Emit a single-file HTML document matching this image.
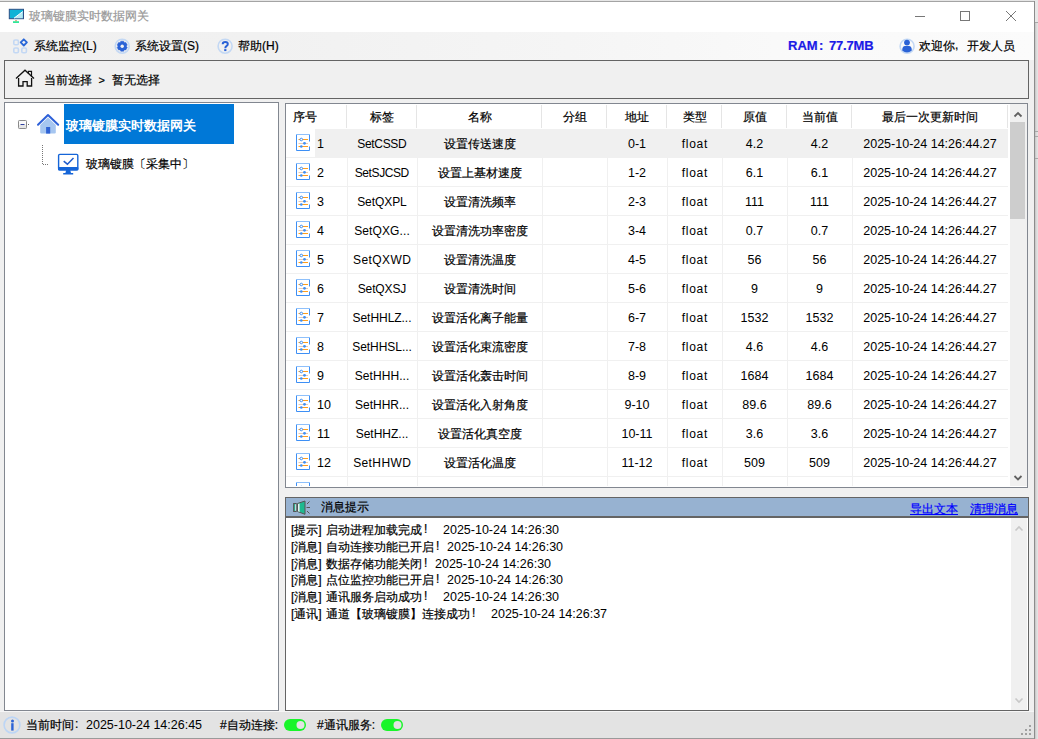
<!DOCTYPE html>
<html><head><meta charset="utf-8">
<style>
*{box-sizing:border-box;margin:0;padding:0}
html,body{width:1038px;height:739px;overflow:hidden;background:#f0f0f0;font-family:"Liberation Sans",sans-serif;font-size:12px;color:#000}
.a{position:absolute;white-space:nowrap}
.panel{position:absolute;border:1px solid #646464}
#tbl{position:absolute;left:0;top:0;width:1038px;height:739px;clip-path:inset(104px 30px 253px 286px)}
.c{text-align:center}
.hc{text-align:center}
.num,.dt{font-size:12.5px}
.lat{}
.flt{letter-spacing:0.75px;text-indent:0.75px}
.msg div{position:absolute;white-space:nowrap}
.lnk{color:#0000ff;text-decoration:underline}
.ram{color:#1a1ae6;font-weight:bold;font-size:13px}
body{-webkit-text-stroke:0.2px currentColor}
.num,.dt,.lat,.flt{-webkit-text-stroke:0;margin-top:1px}
.c.cjk{margin-left:0}

</style></head><body>
<div class="a" style="left:0;top:0;width:1038px;height:1px;background:#e6e6e6"></div>
<div class="a" style="left:0;top:1px;width:1035px;height:1px;background:#a4a4a4"></div>
<div class="a" style="left:0;top:2px;width:1034px;height:30px;background:#fff"></div>
<div class="a" style="left:1034px;top:1px;width:1px;height:738px;background:#8c8c8c"></div>
<div class="a" style="left:1035px;top:0;width:3px;height:22px;background:#e8e8e8"></div>
<div class="a" style="left:1035px;top:22px;width:3px;height:717px;background:linear-gradient(to right,#c4c4c4,#dadada 50%,#e6e6e6)"></div>
<div class="a" style="left:1035px;top:22px;width:3px;height:1px;background:#a8a8a8"></div>
<div class="a" style="left:1035px;top:131px;width:3px;height:1px;background:#a8a8a8"></div>
<div class="a" style="left:1035px;top:136px;width:3px;height:1px;background:#a8a8a8"></div>
<div class="a" style="left:1035px;top:158px;width:3px;height:1px;background:#a8a8a8"></div>
<div class="a" style="left:0;top:738px;width:1034px;height:1px;background:#9a9a9a"></div>
<!-- title -->
<svg class="a" style="left:0;top:0" width="40" height="30" viewBox="0 0 40 30">
  <rect x="9.3" y="9.3" width="14.2" height="9.4" fill="#0fb3d6" stroke="#2d4f86" stroke-width="1"/>
  <path d="M14 18.2 L22.8 11.5 V18.2 Z" fill="#fff" opacity="0.7"/>
  <path d="M14 18.2 L22.8 11.5" stroke="#fff" stroke-width="1"/>
  <rect x="13" y="21.2" width="6" height="1.8" fill="#2ee89a"/>
  <rect x="15" y="20.2" width="2" height="1" fill="#c87a30" opacity="0.7"/>
</svg>
<div class="a" style="left:29px;top:8px;color:#999">玻璃镀膜实时数据网关</div>
<div class="a" style="left:915px;top:16px;width:10px;height:1px;background:#777"></div>
<div class="a" style="left:960px;top:11px;width:10px;height:10px;border:1px solid #777"></div>
<svg class="a" style="left:1005px;top:10px" width="12" height="12" viewBox="0 0 12 12"><path d="M1 1L11 11M11 1L1 11" stroke="#777" stroke-width="1"/></svg>

<!-- menu -->
<div class="a" style="left:0;top:32px;width:1034px;height:28px;background:linear-gradient(to right,#f0f0f0 0%,#f1f1f1 25%,#f5f5f5 55%,#f9f9f9 75%,#fbfbfb 100%)"></div>
<svg class="a" style="left:0;top:0" width="1038" height="739" viewBox="0 0 1038 739">
 <g fill="none" stroke="#c3d8f4" stroke-width="1.6">
  <rect x="13.8" y="40" width="4.6" height="4.8" rx="1.3"/>
  <rect x="13.8" y="48" width="4.6" height="4.8" rx="1.3"/>
  <rect x="21.8" y="48" width="4.6" height="4.8" rx="1.3"/>
 </g>
 <path d="M23.8 39.3 L26.9 42.4 L23.8 45.5 L20.7 42.4 Z" fill="none" stroke="#2a68d8" stroke-width="1.8" stroke-linejoin="round"/>
 <circle cx="122.2" cy="46.2" r="7" fill="none" stroke="#c3d8f4" stroke-width="1.6"/>
 <path d="M120.13 42.89 L120.77 41.20 L123.63 41.20 L124.27 42.89 L124.03 42.76 L125.81 42.46 L127.25 44.94 L126.10 46.34 L126.10 46.06 L127.25 47.46 L125.81 49.94 L124.03 49.64 L124.27 49.51 L123.63 51.20 L120.77 51.20 L120.13 49.51 L120.37 49.64 L118.59 49.94 L117.15 47.46 L118.30 46.06 L118.30 46.34 L117.15 44.94 L118.59 42.46 L120.37 42.76Z" fill="#2a62d6" stroke="#2a62d6" stroke-width="0.5" stroke-linejoin="round"/>
 <circle cx="122.2" cy="46.2" r="1.7" fill="#f2f2f2"/>
 <circle cx="225.1" cy="46.2" r="7" fill="none" stroke="#c3d8f4" stroke-width="1.6"/>
 <circle cx="907.1" cy="46.2" r="7" fill="none" stroke="#c3d8f4" stroke-width="1.6"/>
 <circle cx="907" cy="42.6" r="2.9" fill="#2a62d6"/>
 <path d="M902.2 50.5 Q902.2 46.2 905 46 H909 Q911.8 46.2 911.8 50.5 Q909.5 52.6 907 52.6 Q904.5 52.6 902.2 50.5Z" fill="#2a62d6"/>
</svg>
<svg class="a" style="left:0;top:0" width="1038" height="739" viewBox="0 0 1038 739"><path d="M222.7 44.2 Q222.7 41.9 225.3 41.9 Q227.8 41.9 227.8 44 Q227.8 45.3 226.4 46.1 Q225.3 46.8 225.3 48.2" fill="none" stroke="#2a62d6" stroke-width="2"/><rect x="224.2" y="49.1" width="2.2" height="2" fill="#2a62d6"/></svg>
<div class="a" style="left:34px;top:38px">系统监控(L)</div>
<div class="a" style="left:135px;top:38px">系统设置(S)</div>
<div class="a" style="left:238px;top:38px">帮助(H)</div>
<div class="a ram" style="left:788px;top:38px">RAM</div><div class="a ram" style="left:819px;top:38px">:</div><div class="a ram" style="left:829px;top:38px;letter-spacing:-0.2px">77.7MB</div>
<div class="a" style="left:919px;top:38px">欢迎你</div><div class="a" style="left:955px;top:38px">,</div><div class="a" style="left:967px;top:38px">开发人员</div>

<!-- breadcrumb -->
<div class="panel" style="left:4px;top:60px;width:1025px;height:39px;background:#f0f0f0"></div>
<div class="a" style="left:44px;top:72px">当前选择</div><div class="a" style="left:98.5px;top:74px;font-size:11px">&gt;</div><div class="a" style="left:112px;top:72px">暂无选择</div>
<svg class="a" style="left:0;top:0" width="1038" height="739" viewBox="0 0 1038 739">
 <path d="M16 78.6 L25 70.2 L34 78.6" fill="none" stroke="#111" stroke-width="1.3"/>
 <path d="M18.6 78 V86 H23 V81.6 H27.2 V86 H31.6 V78" fill="none" stroke="#111" stroke-width="1.3"/>
 <path d="M28.4 73.8 V71.4 H31.5 V76.5" fill="none" stroke="#111" stroke-width="1.2"/>
</svg>

<!-- tree panel -->
<div class="panel" style="left:4px;top:102px;width:275px;height:609px;background:#fff;border-color:#828790"></div>
<div class="a" style="left:64px;top:104px;width:170px;height:40px;background:#0078d7"></div>
<div class="a" style="left:66px;top:117px;color:#fff;font-weight:bold;font-size:13px;-webkit-text-stroke:0">玻璃镀膜实时数据网关</div>
<div class="a" style="left:86px;top:156px">玻璃镀膜〔采集中〕</div>
<svg class="a" style="left:0;top:0" width="1038" height="739" viewBox="0 0 1038 739">
 <rect x="18.5" y="120.5" width="8" height="8" fill="#fafafa" stroke="#8a8a8a" rx="0.8"/>
 <rect x="19" y="125" width="7" height="3" fill="#e6e6e6"/>
 <path d="M20.5 124.5 H24.5" stroke="#3040a0" stroke-width="1"/>
 <rect x="28" y="124" width="1" height="1" fill="#666"/>
 <path d="M42.5 145 V165" stroke="#777" stroke-width="1" stroke-dasharray="1 1"/>
 <path d="M43 164.5 H49" stroke="#777" stroke-width="1" stroke-dasharray="1 1"/>
 <path d="M40.2 125 L48 117.6 L55.8 125 V132.5 Q55.8 133.6 54.7 133.6 H41.3 Q40.2 133.6 40.2 132.5 Z" fill="#a6c6f0"/>
 <path d="M38 124.8 L48 115 L58.2 124.8" fill="none" stroke="#2d60d8" stroke-width="2" stroke-linejoin="round" stroke-linecap="round"/>
 <rect x="46.1" y="127" width="4.1" height="6.6" fill="#2f62d4"/>
 <rect x="58.6" y="154.4" width="19.2" height="15.4" rx="1.2" fill="#fff" stroke="#1565d8" stroke-width="1.4"/>
 <rect x="58" y="167" width="20.4" height="3.4" rx="1" fill="#1565d8"/>
 <path d="M66.2 170 H70.2 L71 173 H73.2 V174.4 H63.2 V173 H65.4 Z" fill="#1565d8"/>
 <path d="M63.7 161.2 L67.4 164.2 L73.5 158" fill="none" stroke="#1f5ccc" stroke-width="1.5"/>
</svg>

<!-- table panel -->
<div class="panel" style="left:285px;top:103px;width:743px;height:385px;background:#fff;border-color:#828790"></div>
<div class="a" style="left:1010px;top:104px;width:17px;height:382px;background:#f0f0f0"></div>
<div class="a" style="left:1010px;top:122px;width:15px;height:97px;background:#cdcdcd"></div>
<div id="tbl"><div class="a" style="left:293px;top:109px">序号</div>
<div class="a hc" style="left:347px;width:70px;top:109px">标签</div>
<div class="a" style="left:346px;top:105px;width:1px;height:23px;background:#e5e5e5"></div>
<div class="a hc" style="left:417px;width:125px;top:109px">名称</div>
<div class="a" style="left:416px;top:105px;width:1px;height:23px;background:#e5e5e5"></div>
<div class="a hc" style="left:542px;width:65px;top:109px">分组</div>
<div class="a" style="left:541px;top:105px;width:1px;height:23px;background:#e5e5e5"></div>
<div class="a hc" style="left:607px;width:60px;top:109px">地址</div>
<div class="a" style="left:606px;top:105px;width:1px;height:23px;background:#e5e5e5"></div>
<div class="a hc" style="left:667px;width:55px;top:109px">类型</div>
<div class="a" style="left:666px;top:105px;width:1px;height:23px;background:#e5e5e5"></div>
<div class="a hc" style="left:722px;width:65px;top:109px">原值</div>
<div class="a" style="left:721px;top:105px;width:1px;height:23px;background:#e5e5e5"></div>
<div class="a hc" style="left:787px;width:65px;top:109px">当前值</div>
<div class="a" style="left:786px;top:105px;width:1px;height:23px;background:#e5e5e5"></div>
<div class="a hc" style="left:852px;width:156px;top:109px">最后一次更新时间</div>
<div class="a" style="left:851px;top:105px;width:1px;height:23px;background:#e5e5e5"></div>
<div class="a" style="left:1007px;top:105px;width:1px;height:23px;background:#e5e5e5"></div>
<div class="a" style="left:315px;top:129px;width:693px;height:28px;background:#f0f0f0"></div>
<div class="a" style="left:286px;top:157px;width:722px;height:1px;background:#f0f0f0"></div>
<svg class="a" style="left:296px;top:134px" width="14" height="17" viewBox="0 0 14 17"><path d="M0.5 16.5V0.5H13.5V7.5M13.5 12.5V16.5H0.5" fill="none" stroke="#3d8ff5" stroke-width="1"/><path d="M0 0.5H14" stroke="#8ec0fb"/><path d="M2.5 5.5H12" stroke="#ff9d1a"/><path d="M2.5 9.5H12" stroke="#e8c9b0"/><path d="M2.5 12.5H12" stroke="#ff9d1a"/><circle cx="5.3" cy="5.5" r="1.3" fill="#fff" stroke="#3d8ff5"/><circle cx="8.5" cy="9.3" r="1.4" fill="#3d8ff5"/><circle cx="5.3" cy="12.5" r="1.3" fill="#3d8ff5"/></svg>
<div class="a num" style="left:317px;top:136px">1</div>
<div class="a c lat" style="left:347px;width:70px;top:136px;letter-spacing:-0.33px;text-indent:-0.33px">SetCSSD</div>
<div class="a c cjk" style="left:417px;width:125px;top:136px">设置传送速度</div>
<div class="a c num" style="left:607px;width:60px;top:136px">0-1</div>
<div class="a c flt" style="left:667px;width:55px;top:136px">float</div>
<div class="a c num" style="left:722px;width:65px;top:136px">4.2</div>
<div class="a c num" style="left:787px;width:65px;top:136px">4.2</div>
<div class="a c dt" style="left:852px;width:156px;top:136px">2025-10-24 14:26:44.27</div>
<div class="a" style="left:347px;top:158px;width:1px;height:28px;background:#f0f0f0"></div>
<div class="a" style="left:417px;top:158px;width:1px;height:28px;background:#f0f0f0"></div>
<div class="a" style="left:542px;top:158px;width:1px;height:28px;background:#f0f0f0"></div>
<div class="a" style="left:607px;top:158px;width:1px;height:28px;background:#f0f0f0"></div>
<div class="a" style="left:667px;top:158px;width:1px;height:28px;background:#f0f0f0"></div>
<div class="a" style="left:722px;top:158px;width:1px;height:28px;background:#f0f0f0"></div>
<div class="a" style="left:787px;top:158px;width:1px;height:28px;background:#f0f0f0"></div>
<div class="a" style="left:852px;top:158px;width:1px;height:28px;background:#f0f0f0"></div>
<div class="a" style="left:1008px;top:158px;width:1px;height:28px;background:#f0f0f0"></div>
<div class="a" style="left:286px;top:186px;width:722px;height:1px;background:#f0f0f0"></div>
<svg class="a" style="left:296px;top:163px" width="14" height="17" viewBox="0 0 14 17"><path d="M0.5 16.5V0.5H13.5V7.5M13.5 12.5V16.5H0.5" fill="none" stroke="#3d8ff5" stroke-width="1"/><path d="M0 0.5H14" stroke="#8ec0fb"/><path d="M2.5 5.5H12" stroke="#ff9d1a"/><path d="M2.5 9.5H12" stroke="#e8c9b0"/><path d="M2.5 12.5H12" stroke="#ff9d1a"/><circle cx="5.3" cy="5.5" r="1.3" fill="#fff" stroke="#3d8ff5"/><circle cx="8.5" cy="9.3" r="1.4" fill="#3d8ff5"/><circle cx="5.3" cy="12.5" r="1.3" fill="#3d8ff5"/></svg>
<div class="a num" style="left:317px;top:165px">2</div>
<div class="a c lat" style="left:347px;width:70px;top:165px;letter-spacing:-0.4px;text-indent:-0.4px">SetSJCSD</div>
<div class="a c cjk" style="left:417px;width:125px;top:165px">设置上基材速度</div>
<div class="a c num" style="left:607px;width:60px;top:165px">1-2</div>
<div class="a c flt" style="left:667px;width:55px;top:165px">float</div>
<div class="a c num" style="left:722px;width:65px;top:165px">6.1</div>
<div class="a c num" style="left:787px;width:65px;top:165px">6.1</div>
<div class="a c dt" style="left:852px;width:156px;top:165px">2025-10-24 14:26:44.27</div>
<div class="a" style="left:347px;top:187px;width:1px;height:28px;background:#f0f0f0"></div>
<div class="a" style="left:417px;top:187px;width:1px;height:28px;background:#f0f0f0"></div>
<div class="a" style="left:542px;top:187px;width:1px;height:28px;background:#f0f0f0"></div>
<div class="a" style="left:607px;top:187px;width:1px;height:28px;background:#f0f0f0"></div>
<div class="a" style="left:667px;top:187px;width:1px;height:28px;background:#f0f0f0"></div>
<div class="a" style="left:722px;top:187px;width:1px;height:28px;background:#f0f0f0"></div>
<div class="a" style="left:787px;top:187px;width:1px;height:28px;background:#f0f0f0"></div>
<div class="a" style="left:852px;top:187px;width:1px;height:28px;background:#f0f0f0"></div>
<div class="a" style="left:1008px;top:187px;width:1px;height:28px;background:#f0f0f0"></div>
<div class="a" style="left:286px;top:215px;width:722px;height:1px;background:#f0f0f0"></div>
<svg class="a" style="left:296px;top:192px" width="14" height="17" viewBox="0 0 14 17"><path d="M0.5 16.5V0.5H13.5V7.5M13.5 12.5V16.5H0.5" fill="none" stroke="#3d8ff5" stroke-width="1"/><path d="M0 0.5H14" stroke="#8ec0fb"/><path d="M2.5 5.5H12" stroke="#ff9d1a"/><path d="M2.5 9.5H12" stroke="#e8c9b0"/><path d="M2.5 12.5H12" stroke="#ff9d1a"/><circle cx="5.3" cy="5.5" r="1.3" fill="#fff" stroke="#3d8ff5"/><circle cx="8.5" cy="9.3" r="1.4" fill="#3d8ff5"/><circle cx="5.3" cy="12.5" r="1.3" fill="#3d8ff5"/></svg>
<div class="a num" style="left:317px;top:194px">3</div>
<div class="a c lat" style="left:347px;width:70px;top:194px;letter-spacing:-0.07px;text-indent:-0.07px">SetQXPL</div>
<div class="a c cjk" style="left:417px;width:125px;top:194px">设置清洗频率</div>
<div class="a c num" style="left:607px;width:60px;top:194px">2-3</div>
<div class="a c flt" style="left:667px;width:55px;top:194px">float</div>
<div class="a c num" style="left:722px;width:65px;top:194px">111</div>
<div class="a c num" style="left:787px;width:65px;top:194px">111</div>
<div class="a c dt" style="left:852px;width:156px;top:194px">2025-10-24 14:26:44.27</div>
<div class="a" style="left:347px;top:216px;width:1px;height:28px;background:#f0f0f0"></div>
<div class="a" style="left:417px;top:216px;width:1px;height:28px;background:#f0f0f0"></div>
<div class="a" style="left:542px;top:216px;width:1px;height:28px;background:#f0f0f0"></div>
<div class="a" style="left:607px;top:216px;width:1px;height:28px;background:#f0f0f0"></div>
<div class="a" style="left:667px;top:216px;width:1px;height:28px;background:#f0f0f0"></div>
<div class="a" style="left:722px;top:216px;width:1px;height:28px;background:#f0f0f0"></div>
<div class="a" style="left:787px;top:216px;width:1px;height:28px;background:#f0f0f0"></div>
<div class="a" style="left:852px;top:216px;width:1px;height:28px;background:#f0f0f0"></div>
<div class="a" style="left:1008px;top:216px;width:1px;height:28px;background:#f0f0f0"></div>
<div class="a" style="left:286px;top:244px;width:722px;height:1px;background:#f0f0f0"></div>
<svg class="a" style="left:296px;top:221px" width="14" height="17" viewBox="0 0 14 17"><path d="M0.5 16.5V0.5H13.5V7.5M13.5 12.5V16.5H0.5" fill="none" stroke="#3d8ff5" stroke-width="1"/><path d="M0 0.5H14" stroke="#8ec0fb"/><path d="M2.5 5.5H12" stroke="#ff9d1a"/><path d="M2.5 9.5H12" stroke="#e8c9b0"/><path d="M2.5 12.5H12" stroke="#ff9d1a"/><circle cx="5.3" cy="5.5" r="1.3" fill="#fff" stroke="#3d8ff5"/><circle cx="8.5" cy="9.3" r="1.4" fill="#3d8ff5"/><circle cx="5.3" cy="12.5" r="1.3" fill="#3d8ff5"/></svg>
<div class="a num" style="left:317px;top:223px">4</div>
<div class="a c lat" style="left:347px;width:70px;top:223px;letter-spacing:0.11px;text-indent:0.11px">SetQXG...</div>
<div class="a c cjk" style="left:417px;width:125px;top:223px">设置清洗功率密度</div>
<div class="a c num" style="left:607px;width:60px;top:223px">3-4</div>
<div class="a c flt" style="left:667px;width:55px;top:223px">float</div>
<div class="a c num" style="left:722px;width:65px;top:223px">0.7</div>
<div class="a c num" style="left:787px;width:65px;top:223px">0.7</div>
<div class="a c dt" style="left:852px;width:156px;top:223px">2025-10-24 14:26:44.27</div>
<div class="a" style="left:347px;top:245px;width:1px;height:28px;background:#f0f0f0"></div>
<div class="a" style="left:417px;top:245px;width:1px;height:28px;background:#f0f0f0"></div>
<div class="a" style="left:542px;top:245px;width:1px;height:28px;background:#f0f0f0"></div>
<div class="a" style="left:607px;top:245px;width:1px;height:28px;background:#f0f0f0"></div>
<div class="a" style="left:667px;top:245px;width:1px;height:28px;background:#f0f0f0"></div>
<div class="a" style="left:722px;top:245px;width:1px;height:28px;background:#f0f0f0"></div>
<div class="a" style="left:787px;top:245px;width:1px;height:28px;background:#f0f0f0"></div>
<div class="a" style="left:852px;top:245px;width:1px;height:28px;background:#f0f0f0"></div>
<div class="a" style="left:1008px;top:245px;width:1px;height:28px;background:#f0f0f0"></div>
<div class="a" style="left:286px;top:273px;width:722px;height:1px;background:#f0f0f0"></div>
<svg class="a" style="left:296px;top:250px" width="14" height="17" viewBox="0 0 14 17"><path d="M0.5 16.5V0.5H13.5V7.5M13.5 12.5V16.5H0.5" fill="none" stroke="#3d8ff5" stroke-width="1"/><path d="M0 0.5H14" stroke="#8ec0fb"/><path d="M2.5 5.5H12" stroke="#ff9d1a"/><path d="M2.5 9.5H12" stroke="#e8c9b0"/><path d="M2.5 12.5H12" stroke="#ff9d1a"/><circle cx="5.3" cy="5.5" r="1.3" fill="#fff" stroke="#3d8ff5"/><circle cx="8.5" cy="9.3" r="1.4" fill="#3d8ff5"/><circle cx="5.3" cy="12.5" r="1.3" fill="#3d8ff5"/></svg>
<div class="a num" style="left:317px;top:252px">5</div>
<div class="a c lat" style="left:347px;width:70px;top:252px;letter-spacing:0.4px;text-indent:0.4px">SetQXWD</div>
<div class="a c cjk" style="left:417px;width:125px;top:252px">设置清洗温度</div>
<div class="a c num" style="left:607px;width:60px;top:252px">4-5</div>
<div class="a c flt" style="left:667px;width:55px;top:252px">float</div>
<div class="a c num" style="left:722px;width:65px;top:252px">56</div>
<div class="a c num" style="left:787px;width:65px;top:252px">56</div>
<div class="a c dt" style="left:852px;width:156px;top:252px">2025-10-24 14:26:44.27</div>
<div class="a" style="left:347px;top:274px;width:1px;height:28px;background:#f0f0f0"></div>
<div class="a" style="left:417px;top:274px;width:1px;height:28px;background:#f0f0f0"></div>
<div class="a" style="left:542px;top:274px;width:1px;height:28px;background:#f0f0f0"></div>
<div class="a" style="left:607px;top:274px;width:1px;height:28px;background:#f0f0f0"></div>
<div class="a" style="left:667px;top:274px;width:1px;height:28px;background:#f0f0f0"></div>
<div class="a" style="left:722px;top:274px;width:1px;height:28px;background:#f0f0f0"></div>
<div class="a" style="left:787px;top:274px;width:1px;height:28px;background:#f0f0f0"></div>
<div class="a" style="left:852px;top:274px;width:1px;height:28px;background:#f0f0f0"></div>
<div class="a" style="left:1008px;top:274px;width:1px;height:28px;background:#f0f0f0"></div>
<div class="a" style="left:286px;top:302px;width:722px;height:1px;background:#f0f0f0"></div>
<svg class="a" style="left:296px;top:279px" width="14" height="17" viewBox="0 0 14 17"><path d="M0.5 16.5V0.5H13.5V7.5M13.5 12.5V16.5H0.5" fill="none" stroke="#3d8ff5" stroke-width="1"/><path d="M0 0.5H14" stroke="#8ec0fb"/><path d="M2.5 5.5H12" stroke="#ff9d1a"/><path d="M2.5 9.5H12" stroke="#e8c9b0"/><path d="M2.5 12.5H12" stroke="#ff9d1a"/><circle cx="5.3" cy="5.5" r="1.3" fill="#fff" stroke="#3d8ff5"/><circle cx="8.5" cy="9.3" r="1.4" fill="#3d8ff5"/><circle cx="5.3" cy="12.5" r="1.3" fill="#3d8ff5"/></svg>
<div class="a num" style="left:317px;top:281px">6</div>
<div class="a c lat" style="left:347px;width:70px;top:281px;letter-spacing:-0.12px;text-indent:-0.12px">SetQXSJ</div>
<div class="a c cjk" style="left:417px;width:125px;top:281px">设置清洗时间</div>
<div class="a c num" style="left:607px;width:60px;top:281px">5-6</div>
<div class="a c flt" style="left:667px;width:55px;top:281px">float</div>
<div class="a c num" style="left:722px;width:65px;top:281px">9</div>
<div class="a c num" style="left:787px;width:65px;top:281px">9</div>
<div class="a c dt" style="left:852px;width:156px;top:281px">2025-10-24 14:26:44.27</div>
<div class="a" style="left:347px;top:303px;width:1px;height:28px;background:#f0f0f0"></div>
<div class="a" style="left:417px;top:303px;width:1px;height:28px;background:#f0f0f0"></div>
<div class="a" style="left:542px;top:303px;width:1px;height:28px;background:#f0f0f0"></div>
<div class="a" style="left:607px;top:303px;width:1px;height:28px;background:#f0f0f0"></div>
<div class="a" style="left:667px;top:303px;width:1px;height:28px;background:#f0f0f0"></div>
<div class="a" style="left:722px;top:303px;width:1px;height:28px;background:#f0f0f0"></div>
<div class="a" style="left:787px;top:303px;width:1px;height:28px;background:#f0f0f0"></div>
<div class="a" style="left:852px;top:303px;width:1px;height:28px;background:#f0f0f0"></div>
<div class="a" style="left:1008px;top:303px;width:1px;height:28px;background:#f0f0f0"></div>
<div class="a" style="left:286px;top:331px;width:722px;height:1px;background:#f0f0f0"></div>
<svg class="a" style="left:296px;top:308px" width="14" height="17" viewBox="0 0 14 17"><path d="M0.5 16.5V0.5H13.5V7.5M13.5 12.5V16.5H0.5" fill="none" stroke="#3d8ff5" stroke-width="1"/><path d="M0 0.5H14" stroke="#8ec0fb"/><path d="M2.5 5.5H12" stroke="#ff9d1a"/><path d="M2.5 9.5H12" stroke="#e8c9b0"/><path d="M2.5 12.5H12" stroke="#ff9d1a"/><circle cx="5.3" cy="5.5" r="1.3" fill="#fff" stroke="#3d8ff5"/><circle cx="8.5" cy="9.3" r="1.4" fill="#3d8ff5"/><circle cx="5.3" cy="12.5" r="1.3" fill="#3d8ff5"/></svg>
<div class="a num" style="left:317px;top:310px">7</div>
<div class="a c lat" style="left:347px;width:70px;top:310px;letter-spacing:-0.04px;text-indent:-0.04px">SetHHLZ...</div>
<div class="a c cjk" style="left:417px;width:125px;top:310px">设置活化离子能量</div>
<div class="a c num" style="left:607px;width:60px;top:310px">6-7</div>
<div class="a c flt" style="left:667px;width:55px;top:310px">float</div>
<div class="a c num" style="left:722px;width:65px;top:310px">1532</div>
<div class="a c num" style="left:787px;width:65px;top:310px">1532</div>
<div class="a c dt" style="left:852px;width:156px;top:310px">2025-10-24 14:26:44.27</div>
<div class="a" style="left:347px;top:332px;width:1px;height:28px;background:#f0f0f0"></div>
<div class="a" style="left:417px;top:332px;width:1px;height:28px;background:#f0f0f0"></div>
<div class="a" style="left:542px;top:332px;width:1px;height:28px;background:#f0f0f0"></div>
<div class="a" style="left:607px;top:332px;width:1px;height:28px;background:#f0f0f0"></div>
<div class="a" style="left:667px;top:332px;width:1px;height:28px;background:#f0f0f0"></div>
<div class="a" style="left:722px;top:332px;width:1px;height:28px;background:#f0f0f0"></div>
<div class="a" style="left:787px;top:332px;width:1px;height:28px;background:#f0f0f0"></div>
<div class="a" style="left:852px;top:332px;width:1px;height:28px;background:#f0f0f0"></div>
<div class="a" style="left:1008px;top:332px;width:1px;height:28px;background:#f0f0f0"></div>
<div class="a" style="left:286px;top:360px;width:722px;height:1px;background:#f0f0f0"></div>
<svg class="a" style="left:296px;top:337px" width="14" height="17" viewBox="0 0 14 17"><path d="M0.5 16.5V0.5H13.5V7.5M13.5 12.5V16.5H0.5" fill="none" stroke="#3d8ff5" stroke-width="1"/><path d="M0 0.5H14" stroke="#8ec0fb"/><path d="M2.5 5.5H12" stroke="#ff9d1a"/><path d="M2.5 9.5H12" stroke="#e8c9b0"/><path d="M2.5 12.5H12" stroke="#ff9d1a"/><circle cx="5.3" cy="5.5" r="1.3" fill="#fff" stroke="#3d8ff5"/><circle cx="8.5" cy="9.3" r="1.4" fill="#3d8ff5"/><circle cx="5.3" cy="12.5" r="1.3" fill="#3d8ff5"/></svg>
<div class="a num" style="left:317px;top:339px">8</div>
<div class="a c lat" style="left:347px;width:70px;top:339px;letter-spacing:-0.04px;text-indent:-0.04px">SetHHSL...</div>
<div class="a c cjk" style="left:417px;width:125px;top:339px">设置活化束流密度</div>
<div class="a c num" style="left:607px;width:60px;top:339px">7-8</div>
<div class="a c flt" style="left:667px;width:55px;top:339px">float</div>
<div class="a c num" style="left:722px;width:65px;top:339px">4.6</div>
<div class="a c num" style="left:787px;width:65px;top:339px">4.6</div>
<div class="a c dt" style="left:852px;width:156px;top:339px">2025-10-24 14:26:44.27</div>
<div class="a" style="left:347px;top:361px;width:1px;height:28px;background:#f0f0f0"></div>
<div class="a" style="left:417px;top:361px;width:1px;height:28px;background:#f0f0f0"></div>
<div class="a" style="left:542px;top:361px;width:1px;height:28px;background:#f0f0f0"></div>
<div class="a" style="left:607px;top:361px;width:1px;height:28px;background:#f0f0f0"></div>
<div class="a" style="left:667px;top:361px;width:1px;height:28px;background:#f0f0f0"></div>
<div class="a" style="left:722px;top:361px;width:1px;height:28px;background:#f0f0f0"></div>
<div class="a" style="left:787px;top:361px;width:1px;height:28px;background:#f0f0f0"></div>
<div class="a" style="left:852px;top:361px;width:1px;height:28px;background:#f0f0f0"></div>
<div class="a" style="left:1008px;top:361px;width:1px;height:28px;background:#f0f0f0"></div>
<div class="a" style="left:286px;top:389px;width:722px;height:1px;background:#f0f0f0"></div>
<svg class="a" style="left:296px;top:366px" width="14" height="17" viewBox="0 0 14 17"><path d="M0.5 16.5V0.5H13.5V7.5M13.5 12.5V16.5H0.5" fill="none" stroke="#3d8ff5" stroke-width="1"/><path d="M0 0.5H14" stroke="#8ec0fb"/><path d="M2.5 5.5H12" stroke="#ff9d1a"/><path d="M2.5 9.5H12" stroke="#e8c9b0"/><path d="M2.5 12.5H12" stroke="#ff9d1a"/><circle cx="5.3" cy="5.5" r="1.3" fill="#fff" stroke="#3d8ff5"/><circle cx="8.5" cy="9.3" r="1.4" fill="#3d8ff5"/><circle cx="5.3" cy="12.5" r="1.3" fill="#3d8ff5"/></svg>
<div class="a num" style="left:317px;top:368px">9</div>
<div class="a c lat" style="left:347px;width:70px;top:368px;letter-spacing:0.08px;text-indent:0.08px">SetHHH...</div>
<div class="a c cjk" style="left:417px;width:125px;top:368px">设置活化轰击时间</div>
<div class="a c num" style="left:607px;width:60px;top:368px">8-9</div>
<div class="a c flt" style="left:667px;width:55px;top:368px">float</div>
<div class="a c num" style="left:722px;width:65px;top:368px">1684</div>
<div class="a c num" style="left:787px;width:65px;top:368px">1684</div>
<div class="a c dt" style="left:852px;width:156px;top:368px">2025-10-24 14:26:44.27</div>
<div class="a" style="left:347px;top:390px;width:1px;height:28px;background:#f0f0f0"></div>
<div class="a" style="left:417px;top:390px;width:1px;height:28px;background:#f0f0f0"></div>
<div class="a" style="left:542px;top:390px;width:1px;height:28px;background:#f0f0f0"></div>
<div class="a" style="left:607px;top:390px;width:1px;height:28px;background:#f0f0f0"></div>
<div class="a" style="left:667px;top:390px;width:1px;height:28px;background:#f0f0f0"></div>
<div class="a" style="left:722px;top:390px;width:1px;height:28px;background:#f0f0f0"></div>
<div class="a" style="left:787px;top:390px;width:1px;height:28px;background:#f0f0f0"></div>
<div class="a" style="left:852px;top:390px;width:1px;height:28px;background:#f0f0f0"></div>
<div class="a" style="left:1008px;top:390px;width:1px;height:28px;background:#f0f0f0"></div>
<div class="a" style="left:286px;top:418px;width:722px;height:1px;background:#f0f0f0"></div>
<svg class="a" style="left:296px;top:395px" width="14" height="17" viewBox="0 0 14 17"><path d="M0.5 16.5V0.5H13.5V7.5M13.5 12.5V16.5H0.5" fill="none" stroke="#3d8ff5" stroke-width="1"/><path d="M0 0.5H14" stroke="#8ec0fb"/><path d="M2.5 5.5H12" stroke="#ff9d1a"/><path d="M2.5 9.5H12" stroke="#e8c9b0"/><path d="M2.5 12.5H12" stroke="#ff9d1a"/><circle cx="5.3" cy="5.5" r="1.3" fill="#fff" stroke="#3d8ff5"/><circle cx="8.5" cy="9.3" r="1.4" fill="#3d8ff5"/><circle cx="5.3" cy="12.5" r="1.3" fill="#3d8ff5"/></svg>
<div class="a num" style="left:317px;top:397px">10</div>
<div class="a c lat" style="left:347px;width:70px;top:397px;letter-spacing:0px;text-indent:0px">SetHHR...</div>
<div class="a c cjk" style="left:417px;width:125px;top:397px">设置活化入射角度</div>
<div class="a c num" style="left:607px;width:60px;top:397px">9-10</div>
<div class="a c flt" style="left:667px;width:55px;top:397px">float</div>
<div class="a c num" style="left:722px;width:65px;top:397px">89.6</div>
<div class="a c num" style="left:787px;width:65px;top:397px">89.6</div>
<div class="a c dt" style="left:852px;width:156px;top:397px">2025-10-24 14:26:44.27</div>
<div class="a" style="left:347px;top:419px;width:1px;height:28px;background:#f0f0f0"></div>
<div class="a" style="left:417px;top:419px;width:1px;height:28px;background:#f0f0f0"></div>
<div class="a" style="left:542px;top:419px;width:1px;height:28px;background:#f0f0f0"></div>
<div class="a" style="left:607px;top:419px;width:1px;height:28px;background:#f0f0f0"></div>
<div class="a" style="left:667px;top:419px;width:1px;height:28px;background:#f0f0f0"></div>
<div class="a" style="left:722px;top:419px;width:1px;height:28px;background:#f0f0f0"></div>
<div class="a" style="left:787px;top:419px;width:1px;height:28px;background:#f0f0f0"></div>
<div class="a" style="left:852px;top:419px;width:1px;height:28px;background:#f0f0f0"></div>
<div class="a" style="left:1008px;top:419px;width:1px;height:28px;background:#f0f0f0"></div>
<div class="a" style="left:286px;top:447px;width:722px;height:1px;background:#f0f0f0"></div>
<svg class="a" style="left:296px;top:424px" width="14" height="17" viewBox="0 0 14 17"><path d="M0.5 16.5V0.5H13.5V7.5M13.5 12.5V16.5H0.5" fill="none" stroke="#3d8ff5" stroke-width="1"/><path d="M0 0.5H14" stroke="#8ec0fb"/><path d="M2.5 5.5H12" stroke="#ff9d1a"/><path d="M2.5 9.5H12" stroke="#e8c9b0"/><path d="M2.5 12.5H12" stroke="#ff9d1a"/><circle cx="5.3" cy="5.5" r="1.3" fill="#fff" stroke="#3d8ff5"/><circle cx="8.5" cy="9.3" r="1.4" fill="#3d8ff5"/><circle cx="5.3" cy="12.5" r="1.3" fill="#3d8ff5"/></svg>
<div class="a num" style="left:317px;top:426px">11</div>
<div class="a c lat" style="left:347px;width:70px;top:426px;letter-spacing:0px;text-indent:0px">SetHHZ...</div>
<div class="a c cjk" style="left:417px;width:125px;top:426px">设置活化真空度</div>
<div class="a c num" style="left:607px;width:60px;top:426px">10-11</div>
<div class="a c flt" style="left:667px;width:55px;top:426px">float</div>
<div class="a c num" style="left:722px;width:65px;top:426px">3.6</div>
<div class="a c num" style="left:787px;width:65px;top:426px">3.6</div>
<div class="a c dt" style="left:852px;width:156px;top:426px">2025-10-24 14:26:44.27</div>
<div class="a" style="left:347px;top:448px;width:1px;height:28px;background:#f0f0f0"></div>
<div class="a" style="left:417px;top:448px;width:1px;height:28px;background:#f0f0f0"></div>
<div class="a" style="left:542px;top:448px;width:1px;height:28px;background:#f0f0f0"></div>
<div class="a" style="left:607px;top:448px;width:1px;height:28px;background:#f0f0f0"></div>
<div class="a" style="left:667px;top:448px;width:1px;height:28px;background:#f0f0f0"></div>
<div class="a" style="left:722px;top:448px;width:1px;height:28px;background:#f0f0f0"></div>
<div class="a" style="left:787px;top:448px;width:1px;height:28px;background:#f0f0f0"></div>
<div class="a" style="left:852px;top:448px;width:1px;height:28px;background:#f0f0f0"></div>
<div class="a" style="left:1008px;top:448px;width:1px;height:28px;background:#f0f0f0"></div>
<div class="a" style="left:286px;top:476px;width:722px;height:1px;background:#f0f0f0"></div>
<svg class="a" style="left:296px;top:453px" width="14" height="17" viewBox="0 0 14 17"><path d="M0.5 16.5V0.5H13.5V7.5M13.5 12.5V16.5H0.5" fill="none" stroke="#3d8ff5" stroke-width="1"/><path d="M0 0.5H14" stroke="#8ec0fb"/><path d="M2.5 5.5H12" stroke="#ff9d1a"/><path d="M2.5 9.5H12" stroke="#e8c9b0"/><path d="M2.5 12.5H12" stroke="#ff9d1a"/><circle cx="5.3" cy="5.5" r="1.3" fill="#fff" stroke="#3d8ff5"/><circle cx="8.5" cy="9.3" r="1.4" fill="#3d8ff5"/><circle cx="5.3" cy="12.5" r="1.3" fill="#3d8ff5"/></svg>
<div class="a num" style="left:317px;top:455px">12</div>
<div class="a c lat" style="left:347px;width:70px;top:455px;letter-spacing:0.4px;text-indent:0.4px">SetHHWD</div>
<div class="a c cjk" style="left:417px;width:125px;top:455px">设置活化温度</div>
<div class="a c num" style="left:607px;width:60px;top:455px">11-12</div>
<div class="a c flt" style="left:667px;width:55px;top:455px">float</div>
<div class="a c num" style="left:722px;width:65px;top:455px">509</div>
<div class="a c num" style="left:787px;width:65px;top:455px">509</div>
<div class="a c dt" style="left:852px;width:156px;top:455px">2025-10-24 14:26:44.27</div>
<div class="a" style="left:347px;top:477px;width:1px;height:9px;background:#f0f0f0"></div>
<div class="a" style="left:417px;top:477px;width:1px;height:9px;background:#f0f0f0"></div>
<div class="a" style="left:542px;top:477px;width:1px;height:9px;background:#f0f0f0"></div>
<div class="a" style="left:607px;top:477px;width:1px;height:9px;background:#f0f0f0"></div>
<div class="a" style="left:667px;top:477px;width:1px;height:9px;background:#f0f0f0"></div>
<div class="a" style="left:722px;top:477px;width:1px;height:9px;background:#f0f0f0"></div>
<div class="a" style="left:787px;top:477px;width:1px;height:9px;background:#f0f0f0"></div>
<div class="a" style="left:852px;top:477px;width:1px;height:9px;background:#f0f0f0"></div>
<div class="a" style="left:1008px;top:477px;width:1px;height:9px;background:#f0f0f0"></div>
<svg class="a" style="left:296px;top:482px" width="14" height="17" viewBox="0 0 14 17"><path d="M0.5 16.5V0.5H13.5V7.5M13.5 12.5V16.5H0.5" fill="none" stroke="#3d8ff5" stroke-width="1"/><path d="M0 0.5H14" stroke="#8ec0fb"/><path d="M2.5 5.5H12" stroke="#ff9d1a"/><path d="M2.5 9.5H12" stroke="#e8c9b0"/><path d="M2.5 12.5H12" stroke="#ff9d1a"/><circle cx="5.3" cy="5.5" r="1.3" fill="#fff" stroke="#3d8ff5"/><circle cx="8.5" cy="9.3" r="1.4" fill="#3d8ff5"/><circle cx="5.3" cy="12.5" r="1.3" fill="#3d8ff5"/></svg></div>

<!-- message -->
<div class="panel" style="left:285px;top:517px;width:744px;height:194px;background:#fff;border-top:none;border-color:#646464"></div>
<div class="a" style="left:1011px;top:518px;width:16px;height:192px;background:#f0f0f0"></div>
<div class="a" style="left:285px;top:497px;width:744px;height:21px;background:#97b2d1;border-top:1px solid #646464;border-bottom:2px solid #646464;border-left:1px solid #646464;border-right:1px solid #646464"></div>
<div class="a" style="left:321px;top:499px">消息提示</div>
<svg class="a" style="left:0;top:0" width="1038" height="739" viewBox="0 0 1038 739">
 <rect x="293.6" y="503.5" width="2.6" height="8" fill="#2ab393" stroke="#555" stroke-width="1"/>
 <path d="M297.5 503.5 L305 501 V514.3 L297.5 511.5 Z" fill="#1fb98f" stroke="#555" stroke-width="1" stroke-linejoin="round"/>
 <path d="M307 504 L309.5 501.5 M306.5 507.5 H310 M307 511 L309.5 513.5" stroke="#555" stroke-width="1"/>
 <rect x="295.2" y="504.2" width="0.9" height="6.6" fill="#dff0f0"/>
 <path d="M298 504 L299.6 503.4 V511.9 L298 511.2 Z" fill="#e6f2f2"/>
 <path d="M1014.5 116.5 L1018 113 L1021.5 116.5" fill="none" stroke="#606060" stroke-width="1.8"/>
 <path d="M1014.5 476 L1018 479.5 L1021.5 476" fill="none" stroke="#606060" stroke-width="1.8"/>
 <path d="M1015.5 530.5 L1019 527 L1022.5 530.5" fill="none" stroke="#c8c8c8" stroke-width="1.6"/>
 <path d="M1015.5 698.5 L1019 702 L1022.5 698.5" fill="none" stroke="#c8c8c8" stroke-width="1.6"/>
</svg>
<div class="a lnk" style="left:910px;top:501px">导出文本</div>
<div class="a lnk" style="left:970px;top:501px">清理消息</div>

<div class="a" style="left:291px;top:522px">[提示]</div><div class="a" style="left:326px;top:522px">启动进程加载完成</div><div class="a" style="left:424px;top:522px">!</div><div class="a num" style="left:443px;top:522px">2025-10-24 14:26:30</div>
<div class="a" style="left:291px;top:539px">[消息]</div><div class="a" style="left:326px;top:539px">自动连接功能已开启</div><div class="a" style="left:436px;top:539px">!</div><div class="a num" style="left:447px;top:539px">2025-10-24 14:26:30</div>
<div class="a" style="left:291px;top:556px">[消息]</div><div class="a" style="left:326px;top:556px">数据存储功能关闭</div><div class="a" style="left:424px;top:556px">!</div><div class="a num" style="left:435px;top:556px">2025-10-24 14:26:30</div>
<div class="a" style="left:291px;top:572px">[消息]</div><div class="a" style="left:326px;top:572px">点位监控功能已开启</div><div class="a" style="left:436px;top:572px">!</div><div class="a num" style="left:447px;top:572px">2025-10-24 14:26:30</div>
<div class="a" style="left:291px;top:589px">[消息]</div><div class="a" style="left:326px;top:589px">通讯服务启动成功</div><div class="a" style="left:424px;top:589px">!</div><div class="a num" style="left:443px;top:589px">2025-10-24 14:26:30</div>
<div class="a" style="left:291px;top:606px">[通讯]</div><div class="a" style="left:326px;top:606px">通道【玻璃镀膜】连接成功</div><div class="a" style="left:472px;top:606px">!</div><div class="a num" style="left:491px;top:606px">2025-10-24 14:26:37</div>
<!-- status -->
<div class="a" style="left:0;top:711px;width:1034px;height:27px;background:#e3e3e3;border-top:1px solid #f6f6f6"></div>
<div class="a" style="left:26px;top:717px">当前时间</div><div class="a" style="left:75px;top:717px">:</div><div class="a num" style="left:86px;top:717px">2025-10-24 14:26:45</div>
<div class="a" style="left:220px;top:717px">#自动连接:</div>
<div class="a" style="left:317px;top:717px">#通讯服务:</div>
<svg class="a" style="left:0;top:0" width="1038" height="739" viewBox="0 0 1038 739">
 <circle cx="12" cy="725" r="7.9" fill="none" stroke="#bcd5f5" stroke-width="1.6"/>
 <circle cx="12.5" cy="721" r="1.5" fill="#2a62d6"/>
 <path d="M11.2 723.2 H13.6 V730.6 H11.2 Z" fill="#2a62d6"/>
 <rect x="284" y="719" width="22" height="12" rx="6" fill="#19f52a"/>
 <circle cx="300.5" cy="725" r="4" fill="#e3e3e3"/>
 <rect x="381" y="719" width="22" height="12" rx="6" fill="#19f52a"/>
 <circle cx="397.5" cy="725" r="4" fill="#e3e3e3"/>
 <g fill="#a0a0a0"><rect x="1029" y="725" width="2" height="2"/><rect x="1025" y="729" width="2" height="2"/><rect x="1029" y="729" width="2" height="2"/><rect x="1021" y="733" width="2" height="2"/><rect x="1025" y="733" width="2" height="2"/><rect x="1029" y="733" width="2" height="2"/></g>
</svg>

</body></html>
